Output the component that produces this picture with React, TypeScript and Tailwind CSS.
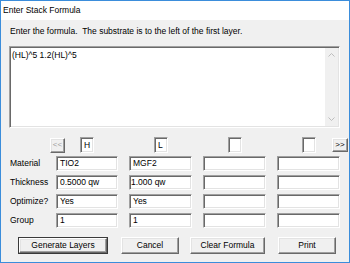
import React from "react";

const font = { fontFamily: '"Liberation Sans", Arial, sans-serif' };

const sunken =
  "border border-t-[#a0a0a0] border-l-[#a0a0a0] border-b-white border-r-white shadow-[inset_1px_1px_0_#696969,inset_-1px_-1px_0_#e3e3e3] bg-white";
const raised =
  "border border-t-white border-l-white border-b-[#696969] border-r-[#696969] shadow-[inset_-1px_-1px_0_#a0a0a0,inset_1px_1px_0_#e3e3e3] bg-[#f0f0f0]";

function Field({ text, pad = "pl-[3px]" }: { text?: string; pad?: string }) {
  return (
    <div className={`${sunken} h-[15px] flex items-center ${pad} text-[8.5px] leading-none text-black overflow-hidden whitespace-nowrap`}>
      {text}
    </div>
  );
}

function Box({ text }: { text?: string }) {
  return (
    <div className={`${sunken} w-[14px] h-[16px] flex items-center pl-[3px] text-[8.5px] leading-none text-black`}>
      {text}
    </div>
  );
}

function Chevron({ up }: { up?: boolean }) {
  return (
    <svg width="7" height="4" viewBox="0 0 7 4" className="block">
      <path
        d={up ? "M0.5 3.5 L3.5 0.5 L6.5 3.5" : "M0.5 0.5 L3.5 3.5 L6.5 0.5"}
        fill="none"
        stroke="#bdbdbd"
        strokeWidth="1"
      />
    </svg>
  );
}

function Btn({ label, w, def }: { label: string; w: string; def?: boolean }) {
  const inner = (
    <div className={`${raised} h-full w-full flex items-center justify-center text-[8.5px] leading-none text-black`}>
      {label}
    </div>
  );
  if (def) {
    return <div className={`${w} h-[17px] border border-[#3a3a3a]`}>{inner}</div>;
  }
  return <div className={`${w} h-[17px]`}>{inner}</div>;
}

export default function App() {
  const rows: { label: string; vals: string[] }[] = [
    { label: "Material", vals: ["TIO2", "MGF2", "", ""] },
    { label: "Thickness", vals: ["0.5000 qw", "1.000 qw", "", ""] },
    { label: "Optimize?", vals: ["Yes", "Yes", "", ""] },
    { label: "Group", vals: ["1", "1", "", ""] },
  ];
  return (
    <div style={font} className="w-[350px] h-[263px] border border-[#3b8ddb] flex flex-col bg-[#f0f0f0] overflow-hidden">
      <div className="h-[19px] bg-white flex items-center pl-[2px] text-[8.5px] text-black leading-none shrink-0">
        Enter Stack Formula
      </div>
      <div className="flex-1 flex flex-col pl-[9px]">
        <div className="mt-[6px] h-[11px] leading-[11px] text-[8.5px] text-black whitespace-pre">
          {"Enter the formula.  The substrate is to the left of the first layer."}
        </div>
        <div className={`mt-[9px] -ml-px w-[331px] h-[82px] ${sunken} flex`}>
          <div className="flex-1 pl-[2px] pt-[3px] text-[8.5px] leading-[11px] text-black">(HL)^5 1.2(HL)^5</div>
          <div className="w-[13px] mr-px my-px bg-[#f0f0f0] flex flex-col items-center justify-between py-[5px]">
            <Chevron up />
            <Chevron />
          </div>
        </div>
        <div className="mt-[9px] h-[16px] flex items-center">
          <div className={`ml-[40px] ${raised} w-[15px] h-[15px] flex items-center justify-center text-[8px] leading-none text-[#a0a0a0]`}>
            &lt;&lt;
          </div>
          <div className="ml-[15px]">
            <Box text="H" />
          </div>
          <div className="ml-[60px]">
            <Box text="L" />
          </div>
          <div className="ml-[60px]">
            <Box />
          </div>
          <div className="ml-[60px]">
            <Box />
          </div>
          <div className={`ml-[16px] ${raised} w-[16px] h-[14px] flex items-center justify-center text-[8px] leading-none text-black`}>
            &gt;&gt;
          </div>
        </div>
        <div className="mt-[3px] grid grid-cols-[35px_62px_63px_63px_63px] gap-x-[11px] gap-y-[4px]">
          {rows.map((r) => (
            <React.Fragment key={r.label}>
              <div className="h-[15px] flex items-center text-[8.5px] leading-none text-black whitespace-nowrap">{r.label}</div>
              {r.vals.map((v, i) => (
                <Field key={i} text={v} pad={r.label === "Thickness" && i === 1 ? "pl-[1px]" : "pl-[3px]"} />
              ))}
            </React.Fragment>
          ))}
        </div>
        <div className="mt-[9px] flex ml-[8px]">
          <Btn label="Generate Layers" w="w-[90px]" def />
          <div className="ml-[13px]">
            <Btn label="Cancel" w="w-[58px]" />
          </div>
          <div className="ml-[11px]">
            <Btn label="Clear Formula" w="w-[75px]" />
          </div>
          <div className="ml-[13px]">
            <Btn label="Print" w="w-[58px]" />
          </div>
        </div>
      </div>
    </div>
  );
}
